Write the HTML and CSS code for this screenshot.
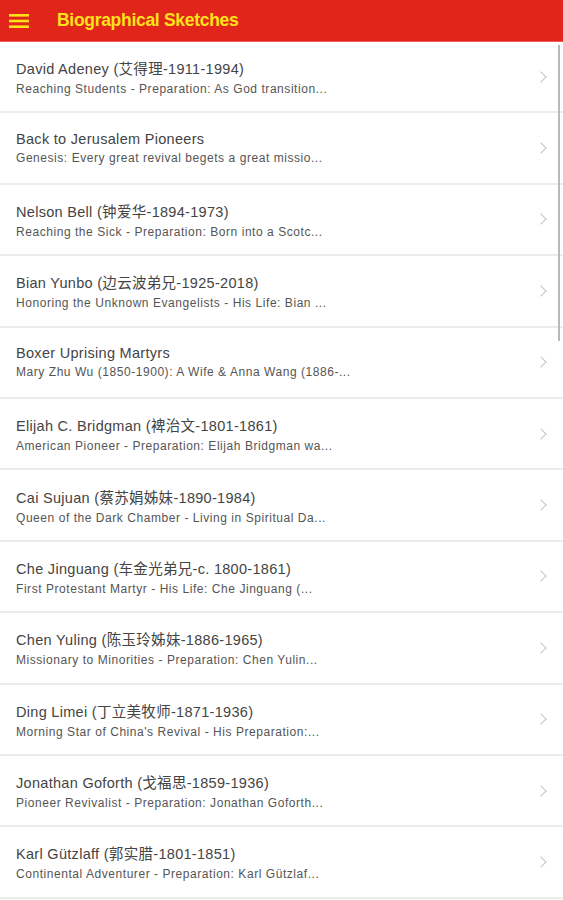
FILE: index.html
```html
<!DOCTYPE html>
<html lang="en">
<head>
    <meta charset="UTF-8">
    <meta name="viewport" content="width=device-width, initial-scale=1.0">
    <title>Biographical Sketches</title>
    <link rel="stylesheet" href="styles.css">
</head>
<body>

    <header class="topbar">
        <span class="menu-btn">
            <svg width="20" height="16" viewBox="0 0 20 16">
                <rect x="0" y="1" width="20" height="2.6" fill="#ffe11a"/>
                <rect x="0" y="6.7" width="20" height="2.6" fill="#ffe11a"/>
                <rect x="0" y="12.4" width="20" height="2.6" fill="#ffe11a"/>
            </svg>
        </span>
        <h1>Biographical Sketches</h1>
    </header>

    <ul class="list">
        <li class="row">
            <div class="text">
                <p class="name">David Adeney (艾得理-1911-1994)</p>
                <p class="desc">Reaching Students - Preparation: As God transition...</p>
            </div>
            <span class="chev"></span>
        </li>
        <li class="row">
            <div class="text">
                <p class="name">Back to Jerusalem Pioneers</p>
                <p class="desc">Genesis: Every great revival begets a great missio...</p>
            </div>
            <span class="chev"></span>
        </li>
        <li class="row">
            <div class="text">
                <p class="name">Nelson Bell (钟爱华-1894-1973)</p>
                <p class="desc">Reaching the Sick - Preparation: Born into a Scotc...</p>
            </div>
            <span class="chev"></span>
        </li>
        <li class="row">
            <div class="text">
                <p class="name">Bian Yunbo (边云波弟兄-1925-2018)</p>
                <p class="desc">Honoring the Unknown Evangelists - His Life: Bian ...</p>
            </div>
            <span class="chev"></span>
        </li>
        <li class="row">
            <div class="text">
                <p class="name">Boxer Uprising Martyrs</p>
                <p class="desc">Mary Zhu Wu (1850-1900): A Wife &amp; Anna Wang (1886-...</p>
            </div>
            <span class="chev"></span>
        </li>
        <li class="row">
            <div class="text">
                <p class="name">Elijah C. Bridgman (裨治文-1801-1861)</p>
                <p class="desc">American Pioneer - Preparation: Elijah Bridgman wa...</p>
            </div>
            <span class="chev"></span>
        </li>
        <li class="row">
            <div class="text">
                <p class="name">Cai Sujuan (蔡苏娟姊妹-1890-1984)</p>
                <p class="desc">Queen of the Dark Chamber - Living in Spiritual Da...</p>
            </div>
            <span class="chev"></span>
        </li>
        <li class="row">
            <div class="text">
                <p class="name">Che Jinguang (车金光弟兄-c. 1800-1861)</p>
                <p class="desc">First Protestant Martyr - His Life: Che Jinguang (...</p>
            </div>
            <span class="chev"></span>
        </li>
        <li class="row">
            <div class="text">
                <p class="name">Chen Yuling (陈玉玲姊妹-1886-1965)</p>
                <p class="desc">Missionary to Minorities - Preparation: Chen Yulin...</p>
            </div>
            <span class="chev"></span>
        </li>
        <li class="row">
            <div class="text">
                <p class="name">Ding Limei (丁立美牧师-1871-1936)</p>
                <p class="desc">Morning Star of China's Revival - His Preparation:...</p>
            </div>
            <span class="chev"></span>
        </li>
        <li class="row">
            <div class="text">
                <p class="name">Jonathan Goforth (戈福思-1859-1936)</p>
                <p class="desc">Pioneer Revivalist - Preparation: Jonathan Goforth...</p>
            </div>
            <span class="chev"></span>
        </li>
        <li class="row">
            <div class="text">
                <p class="name">Karl Gützlaff (郭实腊-1801-1851)</p>
                <p class="desc">Continental Adventurer - Preparation: Karl Gützlaf...</p>
            </div>
            <span class="chev"></span>
        </li>
    </ul>

    <div class="scrollbar"></div>

</body>
</html>
```

FILE: styles.css
```css
body {
    font-family: "Liberation Sans", "Noto Sans CJK SC", sans-serif;
    background: #fff;
    margin: 0;
    overflow: hidden;
}
.topbar {
    height: 41px;
    background: #e1251b;
    border-bottom: 1px solid #f0635c;
    display: flex;
    align-items: center;
    padding-left: 9px;
}
.menu-btn {
    display: flex;
    width: 20px;
    margin-right: 28px;
}
.topbar h1 {
    margin: 0;
    font-size: 17.5px;
    font-weight: bold;
    color: #ffe11a;
    letter-spacing: -0.3px;
}
.list {
    list-style: none;
    margin: 0;
    padding: 0;
}
.row {
    height: 69.4px;
    border-bottom: 2px solid #ececec;
    display: flex;
    align-items: center;
    padding: 0 15px 0 16px;
}
.text {
    flex: 1;
}
.name {
    margin: 0 0 4px;
    font-size: 14.5px;
    letter-spacing: 0.3px;
    color: #444;
}
.desc {
    margin: 0;
    font-size: 12px;
    letter-spacing: 0.55px;
    color: #555;
}
.chev {
    width: 7px;
    height: 7px;
    border-top: 1.5px solid #c4c4c4;
    border-right: 1.5px solid #c4c4c4;
    transform: rotate(45deg);
    margin-right: 3px;
}
.scrollbar {
    position: absolute;
    top: 45px;
    right: 3px;
    width: 2px;
    height: 296px;
    background: #b8b8b8;
}
```
